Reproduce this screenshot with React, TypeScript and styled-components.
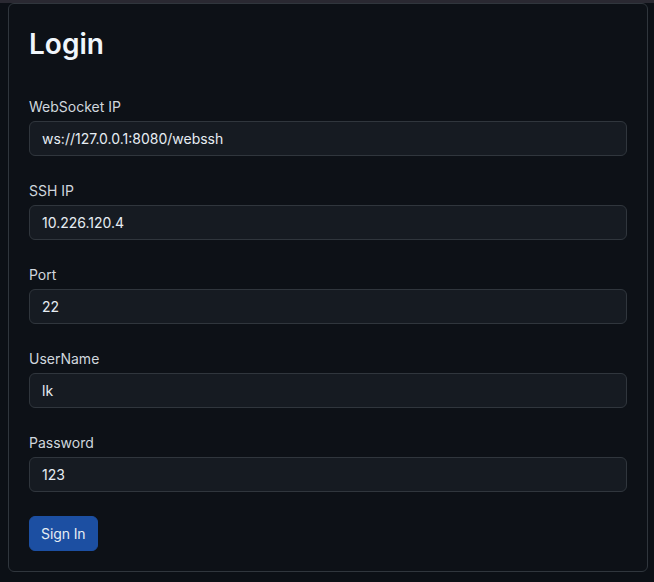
import React from "react";
import styled, { createGlobalStyle } from "styled-components";

const Global = createGlobalStyle`
  html, body {
    margin: 0;
    padding: 0;
    background: #0c1016;
  }
  body {
    border-top: 3px solid #2a2932;
    padding: 0 6px 9px 8px;
    font-family: Inter, "Noto Sans", sans-serif;
    color: #e6edf3;
  }
  * { box-sizing: border-box; }
`;

const Card = styled.form`
  width: 640px;
  background: #0d1117;
  border: 1px solid #30363d;
  border-radius: 6px;
  padding: 24px 20px 20px;
  display: flex;
  flex-direction: column;
`;

const Title = styled.h1`
  margin: 0 0 34px;
  font-size: 28px;
  line-height: 1.2;
  font-weight: 600;
  color: #f0f6fc;
`;

const Field = styled.div`
  display: flex;
  flex-direction: column;
  gap: 4px;
  margin-bottom: 24px;
`;

const Label = styled.label`
  font-size: 14px;
  line-height: 21px;
  color: #d0d7de;
`;

const Input = styled.input`
  height: 35px;
  padding: 6px 12px;
  font-family: Inter, "Noto Sans", sans-serif;
  font-size: 14px;
  line-height: 21px;
  color: #e6edf3;
  background: #161b22;
  border: 1px solid #30363d;
  border-radius: 6px;
  outline: none;
`;

const Button = styled.button`
  align-self: flex-start;
  height: 35px;
  padding: 0 11px;
  font-family: Inter, "Noto Sans", sans-serif;
  font-size: 14px;
  font-weight: 400;
  letter-spacing: -0.1px;
  color: #e6edf3;
  background: #1c4fa2;
  border: 1px solid #1c4fa2;
  border-radius: 6px;
  cursor: pointer;
`;

const fields = [
  { label: "WebSocket IP", value: "ws://127.0.0.1:8080/webssh" },
  { label: "SSH IP", value: "10.226.120.4" },
  { label: "Port", value: "22" },
  { label: "UserName", value: "lk" },
  { label: "Password", value: "123" },
];

export default function App() {
  return (
    <>
      <Global />
      <Card onSubmit={(e) => e.preventDefault()}>
        <Title>Login</Title>
        {fields.map((f) => (
          <Field key={f.label}>
            <Label>{f.label}</Label>
            <Input defaultValue={f.value} />
          </Field>
        ))}
        <Button type="submit">Sign In</Button>
      </Card>
    </>
  );
}
